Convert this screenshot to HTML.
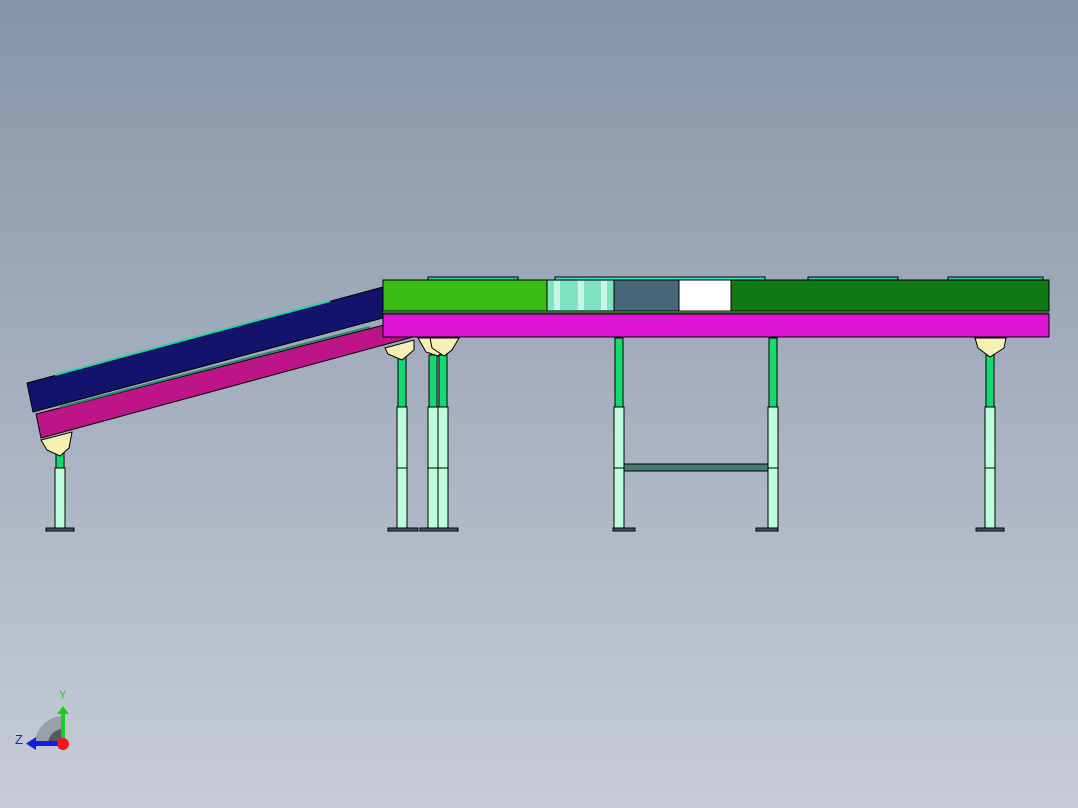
<!DOCTYPE html>
<html><head><style>
html,body{margin:0;padding:0;}
body{width:1078px;height:808px;overflow:hidden;background:linear-gradient(#8595a8 0%,#a3adbd 45%,#c8ccd8 100%);}
svg{position:absolute;left:0;top:0;}
</style></head><body>
<svg width="1078" height="808" viewBox="0 0 1078 808" stroke="#000" stroke-width="1">
<!-- inclined conveyor -->
<polygon points="27,383 383,287 383,318 33,412" fill="#13136e"/>
<polygon points="36,414 384,325 413,337 41,438" fill="#bd1487"/>
<polyline points="55,375 140,352 240,325 330,301" fill="none" stroke="#2bd49a" stroke-width="2"/>
<polyline points="60,407 160,381 260,355 370,327" fill="none" stroke="#2a8a6a" stroke-width="2"/>
<!-- top treads -->
<rect x="428" y="277" width="90" height="4" fill="#2bc9a0"/>
<rect x="555" y="277" width="210" height="4" fill="#3fe0c0"/>
<rect x="808" y="277" width="90" height="4" fill="#2bc9a0"/>
<rect x="948" y="277" width="95" height="4" fill="#2bc9a0"/>
<!-- main conveyor -->
<rect x="383" y="280" width="164" height="31" fill="#3abd14"/>
<rect x="547" y="280" width="67" height="31" fill="#7de3c0"/>
<rect x="554" y="281" width="6" height="29" fill="#c8f5e5" stroke="none"/>
<rect x="578" y="281" width="6" height="29" fill="#c8f5e5" stroke="none"/>
<rect x="601" y="281" width="6" height="29" fill="#c8f5e5" stroke="none"/>
<rect x="614" y="280" width="65" height="31" fill="#46677a"/>
<rect x="679" y="280" width="52" height="31" fill="#ffffff"/>
<rect x="731" y="280" width="318" height="31" fill="#127a14"/>
<rect x="383" y="311" width="666" height="3" fill="#2f6b2a" stroke="none"/>
<rect x="383" y="314" width="666" height="23" fill="#e014d4"/>
<!-- legs -->
<g>
<rect x="56" y="450" width="8" height="18" fill="#14d870"/>
<rect x="55" y="468" width="10" height="60" fill="#bdfcdc"/>
<rect x="46" y="528" width="28" height="3" fill="#485a68"/>
<polygon points="41,440 72,432 69,448 60,456 47,450" fill="#f5f0b4"/>

<rect x="398" y="355" width="8" height="52" fill="#14d870"/>
<rect x="397" y="407" width="10" height="121" fill="#bdfcdc"/>
<line x1="397" y1="468" x2="407" y2="468"/>
<rect x="388" y="528" width="30" height="3" fill="#485a68"/>
<polygon points="385,348 414,340 414,350 402,360 388,354" fill="#f5f0b4"/>

<rect x="429" y="355" width="8" height="52" fill="#14d870"/>
<rect x="428" y="407" width="10" height="121" fill="#bdfcdc"/>
<line x1="428" y1="468" x2="438" y2="468"/>
<rect x="439" y="355" width="8" height="52" fill="#14d870"/>
<rect x="438" y="407" width="10" height="121" fill="#bdfcdc"/>
<line x1="438" y1="468" x2="448" y2="468"/>
<rect x="420" y="528" width="38" height="3" fill="#485a68"/>
<polygon points="418,338 448,338 448,346 438,356 426,352" fill="#f5f0b4"/>
<polygon points="430,338 459,338 452,350 444,356 432,348" fill="#f5f0b4"/>

<rect x="615" y="338" width="8" height="69" fill="#14d870"/>
<rect x="614" y="407" width="10" height="121" fill="#bdfcdc"/>
<line x1="614" y1="468" x2="624" y2="468"/>
<rect x="613" y="528" width="22" height="3" fill="#485a68"/>

<rect x="769" y="338" width="8" height="69" fill="#14d870"/>
<rect x="768" y="407" width="10" height="121" fill="#bdfcdc"/>
<line x1="768" y1="468" x2="778" y2="468"/>
<rect x="756" y="528" width="22" height="3" fill="#485a68"/>
<rect x="624" y="464" width="144" height="7" fill="#467a72"/>

<rect x="986" y="355" width="8" height="52" fill="#14d870"/>
<rect x="985" y="407" width="10" height="121" fill="#bdfcdc"/>
<line x1="985" y1="468" x2="995" y2="468"/>
<rect x="976" y="528" width="28" height="3" fill="#485a68"/>
<polygon points="975,338 1006,338 1004,348 990,357 978,348" fill="#f5f0b4"/>
</g>
<!-- axis triad -->
<g stroke="none">
<path d="M35,744 A28,28 0 0 1 63,716 L63,744 Z" fill="#9aa0aa"/>
<path d="M48,744 A15,15 0 0 1 63,729 L63,744 Z" fill="#555a62"/>
<rect x="61" y="712" width="4" height="30" fill="#18d018"/>
<polygon points="57,714 63,706 69,714" fill="#18d018"/>
<rect x="34" y="741" width="28" height="5" fill="#1020e0"/>
<polygon points="36,737 26,743.5 36,750" fill="#1020e0"/>
<circle cx="63" cy="744" r="6" fill="#f01818"/>
<text x="59" y="698" font-family="Liberation Sans,sans-serif" font-size="11" fill="#18d018">Y</text>
<text x="15" y="744" font-family="Liberation Sans,sans-serif" font-size="13" fill="#1020e0">Z</text>
</g>
</svg>
</body></html>
